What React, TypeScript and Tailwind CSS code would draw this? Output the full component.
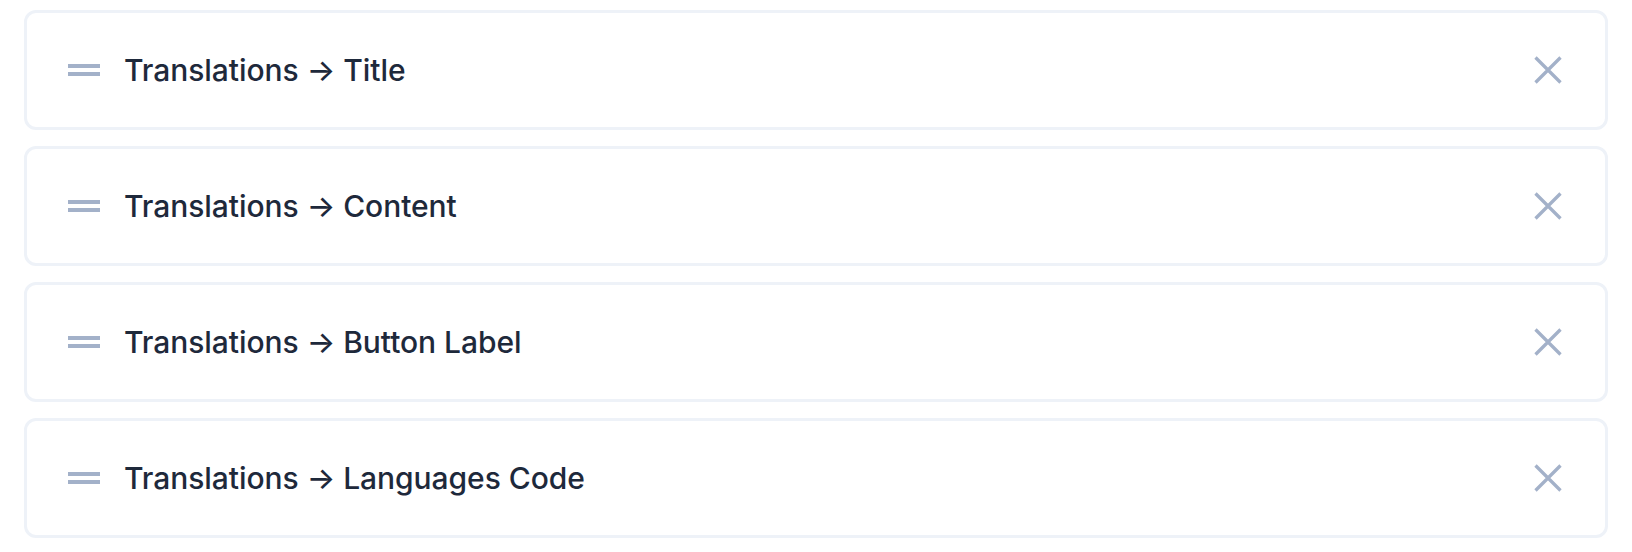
const items = ["Title", "Content", "Button Label", "Languages Code"];

const DragHandle = () => (
  <div className="flex w-8 shrink-0 flex-col gap-1">
    <div className="h-1 w-8 bg-[#a3b1c9]" />
    <div className="h-1 w-8 bg-[#a3b1c9]" />
  </div>
);

const CloseIcon = () => (
  <svg width="28" height="28" viewBox="0 0 28 28" fill="none" className="shrink-0">
    <path d="M1.5 1.5L26.5 26.5M26.5 1.5L1.5 26.5" stroke="#a3b1c9" strokeWidth="3.3" />
  </svg>
);

export default function App() {
  return (
    <div className="min-h-screen bg-white px-6 pt-[10px] font-['Inter',sans-serif]">
      <div className="flex flex-col gap-4">
        {items.map((item) => (
          <div
            key={item}
            className="flex h-[120px] items-center rounded-xl border-[3px] border-[#eef2f8] bg-white pl-[41px] pr-[43px]"
          >
            <DragHandle />
            <span className="ml-6 flex-1 text-[30px] font-medium tracking-[-0.05px] text-[#1e293b]">
              Translations → {item}
            </span>
            <button className="flex items-center">
              <CloseIcon />
            </button>
          </div>
        ))}
      </div>
    </div>
  );
}
